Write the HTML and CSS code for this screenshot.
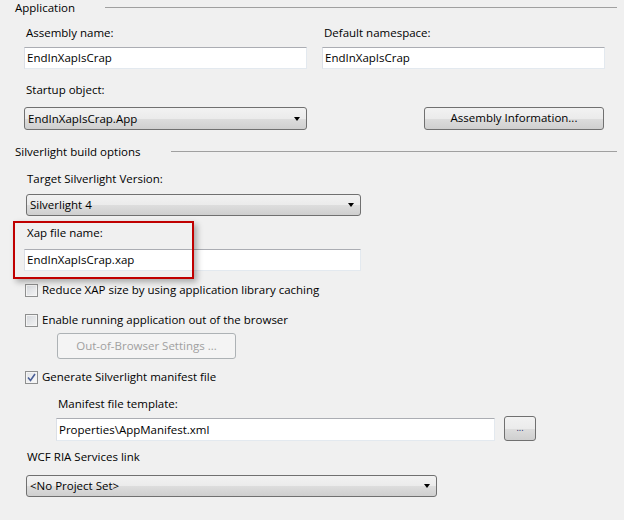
FILE: index.html
```html
<!DOCTYPE html>
<html>
<head>
<meta charset="utf-8">
<link rel="stylesheet" href="styles.css">
</head>
<body>
<div class="page">
  <div class="group-head"><span>Application</span><span class="rule"></span></div>

  <div class="two-col first">
    <div class="field">
      <div class="label">Assembly name:</div>
      <div class="textbox">EndInXapIsCrap</div>
    </div>
    <div class="field">
      <div class="label">Default namespace:</div>
      <div class="textbox">EndInXapIsCrap</div>
    </div>
  </div>

  <div class="label startup">Startup object:</div>
  <div class="two-col combo-row">
    <div class="combo"><span>EndInXapIsCrap.App</span><span class="arrow"></span></div>
    <div class="btn-wrap"><div class="button assembly">Assembly Information...</div></div>
  </div>

  <div class="group-head sl"><span>Silverlight build options</span><span class="rule"></span></div>

  <div class="label target">Target Silverlight Version:</div>
  <div class="combo target-combo"><span>Silverlight 4</span><span class="arrow"></span></div>

  <div class="label xap">Xap file name:</div>
  <div class="textbox xap-box">EndInXapIsCrap.xap</div>

  <div class="check-row c1"><span class="checkbox"></span><span>Reduce XAP size by using application library caching</span></div>
  <div class="check-row c2"><span class="checkbox"></span><span>Enable running application out of the browser</span></div>
  <div class="button disabled oob">Out-of-Browser Settings ...</div>
  <div class="check-row c3"><span class="checkbox checked"><svg width="9" height="9" viewBox="0 0 9 9"><path d="M1 4.5 L3.5 7.5 L8 1" fill="none" stroke="#4a5f97" stroke-width="1.6"/></svg></span><span>Generate Silverlight manifest file</span></div>

  <div class="label manifest">Manifest file template:</div>
  <div class="manifest-row">
    <div class="textbox manifest-box">Properties\AppManifest.xml</div>
    <div class="button dots">...</div>
  </div>

  <div class="label wcf">WCF RIA Services link</div>
  <div class="combo wcf-combo"><span>&lt;No Project Set&gt;</span><span class="arrow"></span></div>

  <div class="highlight"></div>
</div>
</body>
</html>
```

FILE: styles.css
```css
html, body {
  margin: 0;
  padding: 0;
  background: #f0f0f0;
}
body {
  font-family: "Open Sans", "Noto Sans", sans-serif;
  font-size: 11.5px;
  color: #000;
  width: 624px;
  height: 520px;
  overflow: hidden;
}
.page {
  position: relative;
  height: 520px;
}
.group-head {
  display: flex;
  align-items: center;
  height: 16px;
  line-height: 16px;
  margin-left: 15px;
  margin-right: 7px;
}
.group-head .rule {
  flex: 1;
  margin-left: 30px;
  border-top: 1px solid #a0a0a0;
  margin-top: -2px;
}
.group-head.sl {
  margin-top: 14px;
}
.label {
  height: 16px;
  line-height: 16px;
  padding-left: 2px;
}
.two-col {
  display: grid;
  grid-template-columns: 283px 283px;
  column-gap: 15px;
  margin-left: 24px;
}
.two-col.first {
  margin-top: 9px;
}
.field .textbox {
  margin-top: 6px;
}
.textbox {
  box-sizing: border-box;
  height: 22px;
  line-height: 20px;
  background: #fff;
  border: 1px solid #e3e9ef;
  border-top-color: #abadb3;
  border-left-color: #dbdfe6;
  padding-left: 2px;
  white-space: nowrap;
}
.startup {
  margin-left: 24px;
  margin-top: 13px;
}
.combo-row {
  margin-top: 9px;
}
.combo {
  box-sizing: border-box;
  height: 23px;
  line-height: 21px;
  border: 1px solid #707070;
  border-radius: 3px;
  background: linear-gradient(to bottom, #f2f2f2 0%, #ebebeb 50%, #dddddd 51%, #cfcfcf 100%);
  padding-left: 3px;
  display: flex;
  justify-content: space-between;
  align-items: center;
  padding-right: 6px;
}
.arrow {
  width: 0;
  height: 0;
  border-left: 3.5px solid transparent;
  border-right: 3.5px solid transparent;
  border-top: 4px solid #000;
}
.btn-wrap {
  display: flex;
  justify-content: flex-end;
  padding-right: 1px;
}
.button {
  box-sizing: border-box;
  border: 1px solid #707070;
  border-radius: 3px;
  background: linear-gradient(to bottom, #f2f2f2 0%, #ebebeb 50%, #dddddd 51%, #cfcfcf 100%);
  text-align: center;
}
.assembly {
  width: 180px;
  height: 23px;
  line-height: 20px;
}
.target {
  margin-left: 25px;
  margin-top: 11px;
}
.target-combo {
  margin-left: 26px;
  margin-top: 7px;
  width: 335px;
  height: 22px;
  line-height: 20px;
}
.xap {
  margin-left: 25px;
  margin-top: 9px;
}
.xap-box {
  margin-left: 24px;
  margin-top: 8px;
  width: 337px;
}
.check-row {
  display: flex;
  align-items: center;
  height: 16px;
  line-height: 16px;
  margin-left: 25px;
  gap: 4px;
}
.checkbox {
  box-sizing: border-box;
  width: 13px;
  height: 13px;
  border: 1px solid #8e8f8f;
  background: linear-gradient(135deg, #d4d7dc 0%, #f4f4f4 100%);
  box-shadow: inset 0 0 0 1px #f4f4f4;
  display: flex;
  align-items: center;
  justify-content: center;
}
.checkbox.checked {
  background: linear-gradient(135deg, #e0e2e6 0%, #fbfbfb 100%);
}
.c1 {
  margin-top: 11px;
}
.c2 {
  margin-top: 14px;
}
.oob {
  margin-left: 57px;
  margin-top: 5px;
  width: 179px;
  height: 26px;
  line-height: 24px;
}
.button.disabled {
  border-color: #adb2b5;
  background: #f4f4f4;
  color: #a0a0a0;
}
.c3 {
  margin-top: 10px;
}
.manifest {
  margin-left: 56px;
  margin-top: 11px;
}
.manifest-row {
  display: flex;
  align-items: flex-end;
  margin-left: 56px;
  margin-top: 4px;
  height: 25px;
  gap: 9px;
}
.manifest-box {
  width: 439px;
  height: 23px;
  line-height: 21px;
}
.dots {
  width: 32px;
  height: 25px;
  line-height: 22px;
  font-size: 9px;
  color: #1a2a6a;
}
.wcf {
  margin-left: 25px;
  margin-top: 8px;
}
.wcf-combo {
  margin-left: 26px;
  margin-top: 10px;
  width: 411px;
  height: 22px;
  line-height: 20px;
}
.highlight {
  position: absolute;
  left: 13px;
  top: 221px;
  width: 181px;
  height: 58px;
  box-sizing: border-box;
  border: 2px solid #c00000;
  box-shadow: 3px 3px 6px rgba(0, 0, 0, 0.3);
}
```
